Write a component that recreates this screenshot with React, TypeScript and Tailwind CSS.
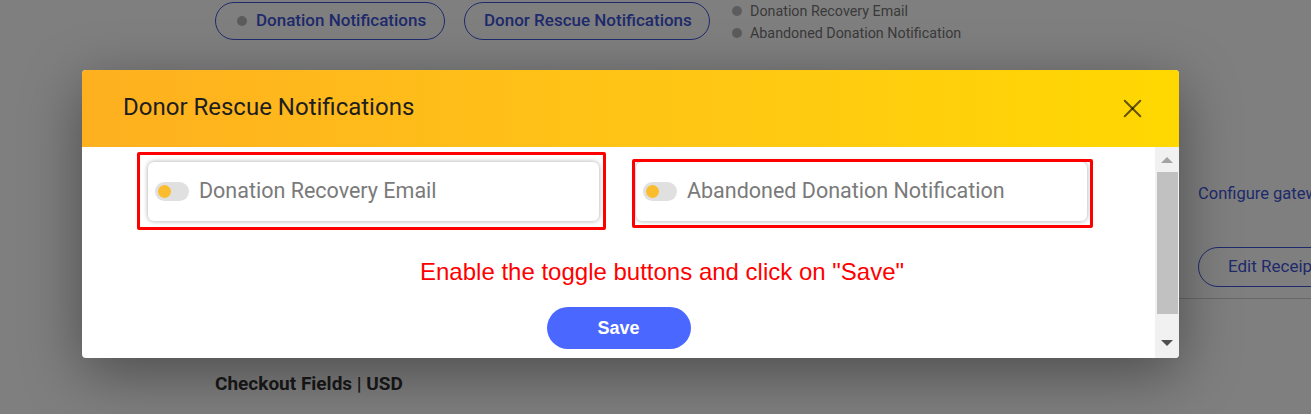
import { X } from 'lucide-react';

function Toggle() {
  return (
    <div className="flex h-[19px] w-[34px] shrink-0 items-center rounded-full bg-[#e0e0e0] pl-[3px]">
      <div className="h-[13px] w-[13px] rounded-full bg-[#fbbd2d]" />
    </div>
  );
}

function OptionCard({ label, box }: { label: string; box: string }) {
  return (
    <div className="relative">
      <div className="flex h-[59px] items-center gap-[10px] rounded-[6px] bg-white pl-[7px] shadow-[0_0_5px_rgba(0,0,0,0.35)]">
        <Toggle />
        <span className="whitespace-nowrap text-[21.5px] text-[#7a7a7a]">{label}</span>
      </div>
      <div className={`pointer-events-none absolute rounded-[2px] border-[3px] border-[#ff0000] ${box}`} />
    </div>
  );
}

export default function App() {
  return (
    <div className="relative h-[414px] w-full overflow-hidden bg-white font-['Roboto',sans-serif]">
      {/* page under the dialog */}
      <div className="pl-[215px]">
        <div className="flex items-start">
          <div className="mt-[2px] flex h-[38px] w-[230px] items-center gap-[9px] rounded-full border border-[#3f55d8] pl-[21px]">
            <span className="h-[10px] w-[10px] rounded-full bg-[#b8b8b8]" />
            <span className="whitespace-nowrap text-[17px] font-medium text-[#3f55d8]">Donation Notifications</span>
          </div>
          <div className="ml-[19px] mt-[2px] flex h-[38px] w-[246px] items-center rounded-full border border-[#3f55d8] pl-[19px]">
            <span className="whitespace-nowrap text-[17px] font-medium text-[#3f55d8]">Donor Rescue Notifications</span>
          </div>
          <ul className="ml-[22px] whitespace-nowrap text-[14.3px] leading-[22px] text-[#757575]">
            <li className="flex items-center gap-[8px]">
              <span className="h-[10px] w-[10px] rounded-full bg-[#b8b8b8]" />
              Donation Recovery Email
            </li>
            <li className="flex items-center gap-[8px]">
              <span className="h-[10px] w-[10px] rounded-full bg-[#b8b8b8]" />
              Abandoned Donation Notification
            </li>
          </ul>
        </div>

        <div className="ml-[983px] mt-[138px] whitespace-nowrap">
          <p className="text-[16.5px] leading-[24px] text-[#3f55d8]">Configure gateway</p>
          <button className="mt-[41px] flex h-[40px] w-[160px] items-center rounded-full border border-[#3f55d8] pl-[29px] text-[17px] text-[#3f55d8]">
            Edit Receipt
          </button>
        </div>
        <div className="mt-[11px] border-t border-[#d0d0d0]" />
        <h3 className="mt-[73px] text-[19px] font-bold leading-[24px] text-[#333]">Checkout Fields | USD</h3>
      </div>

      {/* overlay + dialog */}
      <div className="absolute inset-0 bg-black/50" />
      <div className="absolute left-[82px] top-[70px] flex h-[288px] w-[1097px] flex-col overflow-hidden rounded-[4px] bg-white shadow-[0_15px_60px_rgba(0,0,0,0.4)]">
        <div className="flex h-[77px] shrink-0 items-center justify-between bg-gradient-to-r from-[#feb01f] to-[#ffd800] pl-[41px] pr-[31px]">
          <h2 className="mb-[3px] text-[24px] text-[#1e1e1e]">Donor Rescue Notifications</h2>
          <X className="h-[31px] w-[31px] text-black/60" strokeWidth={1.6} />
        </div>
        <div className="flex min-h-0 flex-1">
          <div className="flex-1 pt-[15px]">
            <div className="grid grid-cols-2 gap-[37px] pl-[66px] pr-[68px]">
              <OptionCard label="Donation Recovery Email" box="-left-[11px] -right-[7px] -top-[10px] -bottom-[9px]" />
              <OptionCard label="Abandoned Donation Notification" box="-left-[4px] -right-[6px] -top-[3px] -bottom-[7px]" />
            </div>
            <p className="mt-[37px] pl-[338px] font-['Liberation_Sans',Arial,sans-serif] text-[24px] leading-[28px] text-[#ff0000]">
              Enable the toggle buttons and click on "Save"
            </p>
            <button className="mx-auto mt-[21px] block h-[42px] w-[144px] rounded-full bg-[#4a67ff] font-['Liberation_Sans',Arial,sans-serif] text-[18px] font-bold text-white">
              Save
            </button>
          </div>
          <div className="flex w-[24px] shrink-0 flex-col items-center bg-[#f1f1f1]">
            <div className="flex h-[25px] items-center justify-center">
              <div className="h-0 w-0 border-x-[6px] border-b-[6px] border-x-transparent border-b-[#a3a3a3]" />
            </div>
            <div className="h-[142px] w-[21px] bg-[#c1c1c1]" />
            <div className="flex flex-1 items-center justify-center pt-[14px]">
              <div className="h-0 w-0 border-x-[6px] border-t-[6px] border-x-transparent border-t-[#505050]" />
            </div>
          </div>
        </div>
      </div>
    </div>
  );
}
